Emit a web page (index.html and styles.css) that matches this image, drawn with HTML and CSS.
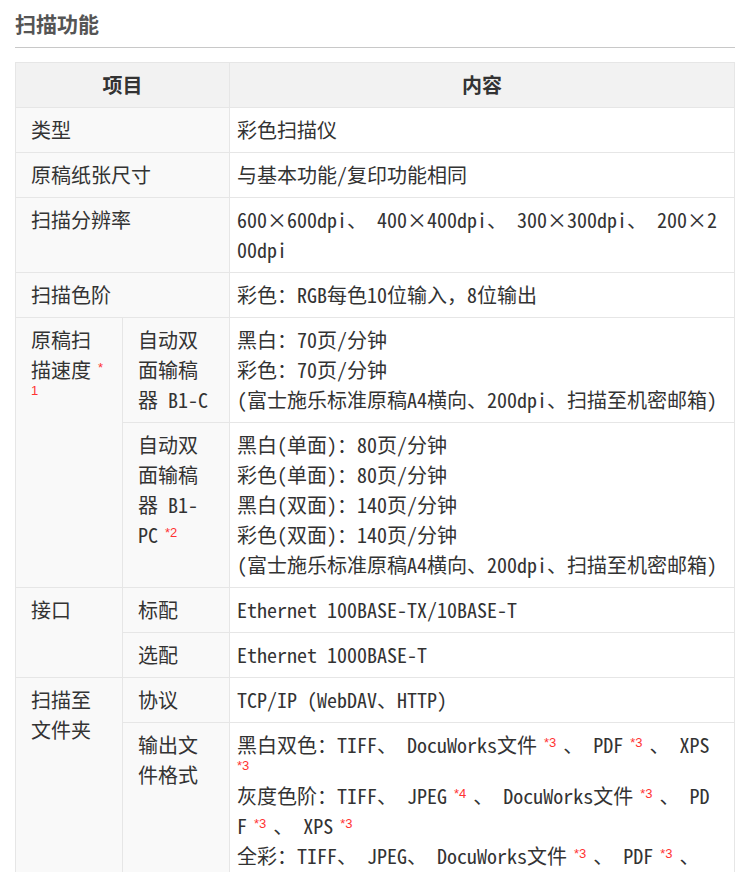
FILE: index.html
```html
<!DOCTYPE html>
<html lang="zh-CN">
<head>
<meta charset="utf-8">
<title>扫描功能</title>
<link rel="stylesheet" href="styles.css">
</head>
<body>
<div class="page">
  <h2 class="title">扫描功能</h2>
  <table class="spec">
    <colgroup>
      <col class="c1">
      <col class="c2">
      <col class="c3">
    </colgroup>
    <thead>
      <tr>
        <th colspan="2"><span class="t">项目</span></th>
        <th><span class="t">内容</span></th>
      </tr>
    </thead>
    <tbody>
      <tr>
        <td colspan="2"><span class="t">类型</span></td>
        <td class="v"><span class="t">彩色扫描仪</span></td>
      </tr>
      <tr>
        <td colspan="2"><span class="t">原稿纸张尺寸</span></td>
        <td class="v"><span class="t">与基本功能/复印功能相同</span></td>
      </tr>
      <tr>
        <td colspan="2"><span class="t">扫描分辨率</span></td>
        <td class="v"><span class="t">600×600dpi、 400×400dpi、 300×300dpi、 200×200dpi</span></td>
      </tr>
      <tr>
        <td colspan="2"><span class="t">扫描色阶</span></td>
        <td class="v"><span class="t">彩色：RGB每色10位输入，8位输出</span></td>
      </tr>
      <tr>
        <td rowspan="2"><span class="t">原稿扫描速度</span> <sup>*1</sup></td>
        <td><span class="t">自动双面输稿器 B1-C</span></td>
        <td class="v"><span class="t">黑白：70页/分钟<br>彩色：70页/分钟<br>(富士施乐标准原稿A4横向、200dpi、扫描至机密邮箱)</span></td>
      </tr>
      <tr>
        <td><span class="t">自动双面输稿器 B1-PC</span> <sup>*2</sup></td>
        <td class="v"><span class="t">黑白(单面)：80页/分钟<br>彩色(单面)：80页/分钟<br>黑白(双面)：140页/分钟<br>彩色(双面)：140页/分钟<br>(富士施乐标准原稿A4横向、200dpi、扫描至机密邮箱)</span></td>
      </tr>
      <tr>
        <td rowspan="2"><span class="t">接口</span></td>
        <td><span class="t">标配</span></td>
        <td class="v"><span class="t">Ethernet 100BASE-TX/10BASE-T</span></td>
      </tr>
      <tr>
        <td><span class="t">选配</span></td>
        <td class="v"><span class="t">Ethernet 1000BASE-T</span></td>
      </tr>
      <tr>
        <td rowspan="2"><span class="t">扫描至文件夹</span></td>
        <td><span class="t">协议</span></td>
        <td class="v"><span class="t">TCP/IP (WebDAV、HTTP)</span></td>
      </tr>
      <tr>
        <td><span class="t">输出文件格式</span></td>
        <td class="v"><span class="t">黑白双色：TIFF、 DocuWorks文件</span> <sup>*3</sup> <span class="t">、 PDF</span> <sup>*3</sup> <span class="t">、 XPS</span> <sup>*3</sup><br><span class="t">灰度色阶：TIFF、 JPEG</span> <sup>*4</sup> <span class="t">、 DocuWorks文件</span> <sup>*3</sup> <span class="t">、 PDF</span> <sup>*3</sup> <span class="t">、 XPS</span> <sup>*3</sup><br><span class="t">全彩：TIFF、 JPEG、 DocuWorks文件</span> <sup>*3</sup> <span class="t">、 PDF</span> <sup>*3</sup> <span class="t">、 XPS</span> <sup>*3</sup></td>
      </tr>
    </tbody>
  </table>
</div>
</body>
</html>
```
FILE: styles.css
```css
body {
  margin: 0;
  background: #fff;
  color: #333;
  font-family: "Noto Sans Mono CJK SC", "Noto Sans CJK SC", sans-serif;
}

.page {
  padding: 0 15px;
}

.title {
  margin: 0;
  padding: 13px 0;
  font-size: 21px;
  line-height: 21px;
  font-weight: bold;
  color: #555;
  border-bottom: 1px solid #c8c8c8;
}

.spec {
  margin-top: 14px;
  width: 720px;
  table-layout: fixed;
  border-collapse: separate;
  border-spacing: 0;
  border-top: 1px solid #e6e6e6;
  border-left: 1px solid #e6e6e6;
  font-size: 14px;
  line-height: 21px;
}

.c1, .c2 { width: 107px; }
.c3 { width: 505px; }

.spec th,
.spec td {
  border-right: 1px solid #e6e6e6;
  border-bottom: 1px solid #e6e6e6;
}

.spec th {
  padding: 7px;
  background: #f2f2f2;
  font-weight: bold;
  text-align: center;
  vertical-align: middle;
}

.spec td {
  padding: 7px 15px;
  background: #f9f9f9;
  text-align: left;
  vertical-align: top;
}

.spec td.v {
  padding: 7px 17px 7px 7px;
  background: #fff;
  word-break: break-all;
}

.t {
  font-size: 20px;
  line-height: 30px;
}

sup {
  font-family: "Liberation Sans", Arial, sans-serif;
  font-size: 13px;
  line-height: 0;
  color: #f33;
  vertical-align: super;
  word-break: break-all;
}
```
